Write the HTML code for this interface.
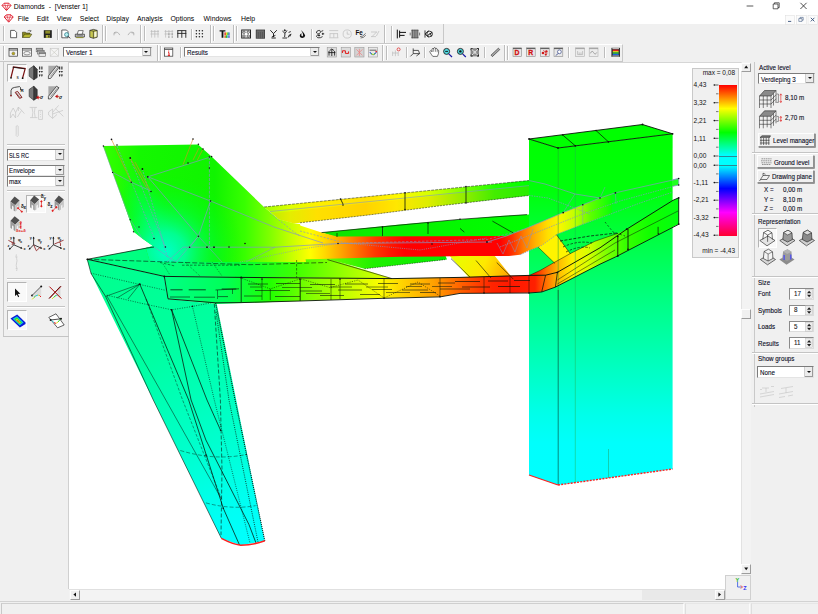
<!DOCTYPE html>
<html lang="en">
<head>
<meta charset="utf-8">
<title>Diamonds - [Venster 1]</title>
<style>
*{box-sizing:border-box;margin:0;padding:0}
html,body{width:818px;height:614px;overflow:hidden;background:#f0f0f0}
body{position:relative;font-family:"Liberation Sans",sans-serif;font-size:6.2px;color:#111;line-height:1}
.abs{position:absolute}
.t{position:absolute;white-space:nowrap;line-height:1}
.white{background:#fff}
.sep{position:absolute;width:1px;background:#bdbdbd;box-shadow:1px 0 0 #fff}
.hline{position:absolute;height:1px;background:#c4c4c4;box-shadow:0 1px 0 #fff}
.combo{position:absolute;background:#fff;border:1px solid #7c7c7c;border-right-color:#e4e4e4;border-bottom-color:#e4e4e4}
.combo .t{left:2px;top:1.6px}
.cbtn{position:absolute;right:0;top:0;bottom:0;width:7px;background:#ececec;border-left:1px solid #cfcfcf}
.cbtn{box-shadow:inset -1px -1px 0 #9a9a9a}
.cbtn:after{content:"";position:absolute;left:1.6px;top:3.4px;border:2.2px solid transparent;border-top:2.2px solid #111;border-bottom:0}
.btn{position:absolute;background:#f0f0f0;border:1px solid #fdfdfd;border-right-color:#909090;border-bottom-color:#909090;box-shadow:.7px .7px 0 #707070}
.sb{box-shadow:none;border-right-color:#9c9c9c;border-bottom-color:#9c9c9c}
.pressed{position:absolute;background:#f9f9f9;border:1px solid #b4b4b4;border-right-color:#fff;border-bottom-color:#fff}
.spin{position:absolute;background:#fff;border:1px solid #8a8a8a;border-right-color:#dcdcdc;border-bottom-color:#dcdcdc}
#rp .t,.ms{transform:scaleX(.845);transform-origin:0 0}
svg{position:absolute;left:0;top:0;overflow:visible}
</style>
</head>
<body>
<!-- title bar + menu -->
<div class="abs white" style="left:0;top:0;width:818px;height:24px"></div>
<div class="t" style="left:13.8px;top:3.9px;font-size:6.9px;color:#000">Diamonds&nbsp; -&nbsp;&nbsp;[Venster 1]</div>
<div class="t" style="top:16.2px;font-size:6.9px;color:#000;left:17.8px">File</div>
<div class="t" style="top:16.2px;font-size:6.9px;color:#000;left:36.7px">Edit</div>
<div class="t" style="top:16.2px;font-size:6.9px;color:#000;left:56.7px">View</div>
<div class="t" style="top:16.2px;font-size:6.9px;color:#000;left:79.8px">Select</div>
<div class="t" style="top:16.2px;font-size:6.9px;color:#000;left:106.3px">Display</div>
<div class="t" style="top:16.2px;font-size:6.9px;color:#000;left:137px">Analysis</div>
<div class="t" style="top:16.2px;font-size:6.9px;color:#000;left:170.5px">Options</div>
<div class="t" style="top:16.2px;font-size:6.9px;color:#000;left:203.6px">Windows</div>
<div class="t" style="top:16.2px;font-size:6.9px;color:#000;left:241px">Help</div>

<!-- toolbar rows -->
<div class="abs" style="left:0;top:24px;width:444px;height:19.5px;border-right:1px solid #c8c8c8;border-bottom:1px solid #c8c8c8"></div>
<div class="abs" style="left:0;top:43.5px;width:623px;height:18px;border-right:1px solid #c8c8c8;border-bottom:1px solid #c8c8c8;border-top:1px solid #fff"></div>

<!-- left panel -->
<div class="abs" style="left:0;top:61.5px;width:69px;height:539px;background:#f0f0f0"></div>
<div class="abs" style="left:3px;top:62px;width:1px;height:274px;background:#c9c9c9"></div>

<!-- canvas -->
<div class="abs white" style="left:68px;top:61.5px;width:673px;height:527.5px;border-left:1px solid #d0d0d0;border-top:1px solid #d6d6d6"></div>

<!-- vertical scrollbar -->
<div class="abs" style="left:741px;top:62px;width:10px;height:512px;background:#f3f3f3;border-left:1px solid #e2e2e2"></div>
<div class="btn sb" style="left:741px;top:62.5px;width:10px;height:9px"></div>
<div class="btn sb" style="left:741px;top:564px;width:10px;height:9.5px"></div>
<div class="btn sb" style="left:741px;top:309px;width:10px;height:10px"></div>
<!-- horizontal scrollbar -->
<div class="abs" style="left:69px;top:589px;width:656px;height:11px;background:#f3f3f3;border-top:1px solid #e0e0e0"></div>
<div class="abs" style="left:642px;top:590px;width:73px;height:10px;background:#e9e9e9"></div>
<div class="btn sb" style="left:69.5px;top:589.5px;width:10px;height:10px"></div>
<div class="btn sb" style="left:714.5px;top:589.5px;width:10px;height:10px"></div>
<!-- axis box -->
<div class="abs" style="left:725px;top:574.5px;width:25.5px;height:25px;background:#f0f0f0;border:1px solid #d0d0d0"></div>

<!-- right panel -->
<div class="abs" style="left:751.5px;top:61.5px;width:67px;height:540px;background:#f0f0f0"></div>
<div class="abs" style="left:753.5px;top:62px;width:1px;height:345px;background:#c9c9c9"></div>

<!-- status bar -->
<div class="abs" style="left:0;top:600.5px;width:818px;height:13.5px;background:#f0f0f0;border-top:1px solid #d2d2d2"></div>
<div class="abs" style="left:1px;top:602.5px;width:683px;height:11.5px;border-top:1px solid #cfcfcf;border-left:1px solid #c8c8c8;border-right:1px solid #fbfbfb"></div>
<div class="abs" style="left:685px;top:602.5px;width:65px;height:11.5px;border-top:1px solid #e6e6e6;border-left:1px solid #dedede;border-right:1px solid #fbfbfb"></div>
<div class="abs" style="left:751px;top:602.5px;width:67px;height:11.5px;border-top:1px solid #e6e6e6;border-left:1px solid #dedede"></div>
<svg width="818" height="614" viewBox="0 0 818 614" shape-rendering="geometricPrecision">
<defs>
<linearGradient id="gCol" gradientUnits="userSpaceOnUse" x1="0" y1="125" x2="0" y2="487">
 <stop offset="0" stop-color="#00ff00"/><stop offset=".18" stop-color="#00ff0a"/><stop offset=".35" stop-color="#00ff50"/>
 <stop offset=".5" stop-color="#00ff88"/><stop offset=".68" stop-color="#00ffc4"/><stop offset=".8" stop-color="#00ffea"/><stop offset=".88" stop-color="#00fffc"/><stop offset="1" stop-color="#00ffff"/>
</linearGradient>
<linearGradient id="gLeg" gradientUnits="userSpaceOnUse" x1="120" y1="250" x2="250" y2="545">
 <stop offset="0" stop-color="#00ff8c"/><stop offset=".35" stop-color="#00ffa2"/><stop offset=".65" stop-color="#00ffcc"/><stop offset=".88" stop-color="#00fff4"/><stop offset="1" stop-color="#00ffff"/>
</linearGradient>
<linearGradient id="gUp" gradientUnits="userSpaceOnUse" x1="264" y1="0" x2="529" y2="0">
 <stop offset="0" stop-color="#a0ff00"/><stop offset=".1" stop-color="#e0ff00"/><stop offset=".2" stop-color="#fff000"/>
 <stop offset=".38" stop-color="#ffe000"/><stop offset=".5" stop-color="#fff800"/><stop offset=".62" stop-color="#d8ff00"/>
 <stop offset=".75" stop-color="#80ff00"/><stop offset=".87" stop-color="#20ff00"/><stop offset="1" stop-color="#00ff00"/>
</linearGradient>
<linearGradient id="gMid" gradientUnits="userSpaceOnUse" x1="100" y1="0" x2="612" y2="0">
<stop offset="0.0000" stop-color="#38ff00"/><stop offset="0.0781" stop-color="#14f800"/><stop offset="0.2246" stop-color="#10f400"/><stop offset="0.2832" stop-color="#38ff00"/><stop offset="0.3320" stop-color="#80ff00"/><stop offset="0.3750" stop-color="#c8ff00"/><stop offset="0.4102" stop-color="#ffff00"/><stop offset="0.4395" stop-color="#ffd800"/><stop offset="0.4688" stop-color="#ffa800"/><stop offset="0.4922" stop-color="#ff8000"/><stop offset="0.5117" stop-color="#ff6000"/><stop offset="0.5371" stop-color="#ff3800"/><stop offset="0.5664" stop-color="#ff1800"/><stop offset="0.5957" stop-color="#ff0000"/><stop offset="0.7812" stop-color="#ff0000"/><stop offset="0.8047" stop-color="#ff3000"/><stop offset="0.8281" stop-color="#ff7c00"/><stop offset="0.8516" stop-color="#ffb400"/><stop offset="0.8750" stop-color="#ffe000"/><stop offset="0.8984" stop-color="#f8f800"/><stop offset="0.9277" stop-color="#c0ff00"/><stop offset="0.9570" stop-color="#60ff00"/><stop offset="1.0000" stop-color="#08ff08"/>
</linearGradient>
<linearGradient id="gLow" gradientUnits="userSpaceOnUse" x1="160" y1="0" x2="680" y2="0">
<stop offset="0.0000" stop-color="#00ff8a"/><stop offset="0.1250" stop-color="#00ff58"/><stop offset="0.2115" stop-color="#20ff00"/><stop offset="0.2885" stop-color="#80ff00"/><stop offset="0.3654" stop-color="#c8ff00"/><stop offset="0.4231" stop-color="#fcfc00"/><stop offset="0.4692" stop-color="#ffd000"/><stop offset="0.5269" stop-color="#ffa000"/><stop offset="0.5827" stop-color="#ff5c00"/><stop offset="0.6385" stop-color="#ff2400"/><stop offset="0.6769" stop-color="#ff1800"/><stop offset="0.7212" stop-color="#ff2000"/><stop offset="0.7423" stop-color="#ff7000"/><stop offset="0.7654" stop-color="#ffb800"/><stop offset="0.7923" stop-color="#fff000"/><stop offset="0.8231" stop-color="#d8ff00"/><stop offset="0.8538" stop-color="#88ff00"/><stop offset="0.8942" stop-color="#38ff00"/><stop offset="0.9423" stop-color="#10ff00"/><stop offset="1.0000" stop-color="#00ff10"/>
</linearGradient>
<radialGradient id="gCy" gradientUnits="userSpaceOnUse" cx="166" cy="252" r="78">
 <stop offset="0" stop-color="#00ffc8"/><stop offset=".25" stop-color="#00ffa0" stop-opacity=".9"/><stop offset=".6" stop-color="#00ff40" stop-opacity=".5"/><stop offset="1" stop-color="#00ff00" stop-opacity="0"/>
</radialGradient>
<linearGradient id="gTopF" gradientUnits="userSpaceOnUse" x1="87" y1="0" x2="395" y2="0">
 <stop offset="0" stop-color="#00ff8a"/><stop offset=".3" stop-color="#00ff78"/><stop offset=".5" stop-color="#00ff34"/><stop offset=".68" stop-color="#40ff00"/><stop offset=".85" stop-color="#a0ff00"/><stop offset="1" stop-color="#f0ff00"/>
</linearGradient>
<linearGradient id="gBr1" gradientUnits="userSpaceOnUse" x1="455" y1="256" x2="510" y2="280">
 <stop offset="0" stop-color="#e8ff00"/><stop offset=".5" stop-color="#ffe800"/><stop offset="1" stop-color="#ffa000"/>
</linearGradient>
<linearGradient id="gGF" gradientUnits="userSpaceOnUse" x1="320" y1="0" x2="530" y2="0">
 <stop offset="0" stop-color="#10e000"/><stop offset=".3" stop-color="#08f000"/><stop offset="1" stop-color="#00ff00"/>
</linearGradient>
<linearGradient id="gStrip" gradientUnits="userSpaceOnUse" x1="300" y1="0" x2="447" y2="0">
 <stop offset="0" stop-color="#90ff00"/><stop offset=".25" stop-color="#58fa00"/><stop offset=".5" stop-color="#20f000"/><stop offset="1" stop-color="#04ec00"/>
</linearGradient>
<radialGradient id="gCy2" gradientUnits="userSpaceOnUse" cx="0" cy="0" r="1" gradientTransform="translate(150,222) rotate(68) scale(62,24)">
 <stop offset="0" stop-color="#00ff88" stop-opacity=".85"/><stop offset=".5" stop-color="#00ff50" stop-opacity=".5"/><stop offset="1" stop-color="#00ff20" stop-opacity="0"/>
</radialGradient>
</defs>

<!-- column -->
<polygon points="529,139 558,148 558,485 529,475" fill="url(#gCol)"/>
<polygon points="558,148 672.6,133.8 672.6,469 558,485" fill="url(#gCol)"/>
<polygon points="529,139 642.5,124.5 672.6,133.8 558,148" fill="#00ff00"/>
<!-- beam tabs on column right -->
<polygon points="672,180 678.7,178.5 678.7,185 672,186.5" fill="#20ff20"/>

<!-- leg + slab left face -->
<polygon points="87,259.4 164,276.4 167.8,299 216.8,304 264.8,540.8 240.8,545.3 221.4,538.4 91.3,273.9" fill="url(#gLeg)"/>

<!-- slab top face -->
<polygon points="87,259.4 145.7,248.1 154,247 200,255 327.4,258 392,278.6 240.6,277 164,276.4" fill="url(#gTopF)"/>
<!-- thin green strip under red band -->
<polygon points="300,258 445,254.5 447,259.5 364.5,268.8 327.4,259" fill="url(#gStrip)"/>

<!-- wing -->
<polygon points="103,146 198,144.5 211,156 264,207 279,219.5 294,223.5 300,224 306,262 150,262 145.7,248.1 153,246 143,239 134,232" fill="url(#gMid)"/>
<polygon points="103,146 198,144.5 211,156 264,207 279,219.5 294,223.5 300,224 306,262 150,262 145.7,248.1 153,246 143,239 134,232" fill="url(#gCy2)"/>
<polygon points="103,146 198,144.5 211,156 264,207 279,219.5 294,223.5 300,224 306,262 150,262 145.7,248.1 153,246 143,239 134,232" fill="url(#gCy)"/>

<!-- upper beam -->
<polygon points="264,207 529,180.5 529,195.5 440,205.8 368.5,215 300,222.8 294,223.5 279,219.5" fill="url(#gUp)"/>

<polygon points="272,213.2 529,186 529,195.5 440,205.8 368.5,215 300,222.8 294,223.5 279,219.5" fill="#ff9000" opacity=".16"/>
<path d="M270,211.5 L529,185.6" stroke="#8595c4" stroke-width=".6" fill="none"/>
<!-- green top face of mid beam -->
<polygon points="321.5,232.6 400,224.6 460,219.6 500,216 529,214.6 529,229 508,237 337,237.5" fill="url(#gGF)"/>

<!-- braces -->
<polygon points="449,255 494,255 513.3,279.1 469.3,278" fill="url(#gBr1)"/>
<polygon points="538,247 556.3,234.5 570.5,254 555,263.5" fill="#fff400"/>
<polygon points="529,275.6 540,270.5 554,262.6 570.6,253.4 594.8,241.3 618,233.2 629,228 600,248.5 557.4,273 545.6,275.6" fill="url(#gLow)"/>

<!-- lower beam front face -->
<polygon points="164,276.4 240.6,277 392,278.6 460,277.2 529,275.2 545.6,275.2 557.4,272.3 600,247.8 626.7,229.2 673,200.3 678.7,197.8 678.7,224.1 615.4,256.8 600,264 555.4,286.9 541.7,291.8 529,292.8 460,293.2 440,296.7 384,298.1 300,301 285,301.5 216.8,304 167.8,299" fill="url(#gLow)"/>

<!-- mid band (wing taper + red band + diagonal) -->
<polygon points="279,219.5 294,223.5 321.5,232.6 337,236.5 440,236.3 506.5,236 526,228.4 535.8,224.2 563.2,212.6 582.8,204.8 600,198 612,193 612,213.5 582.8,224.3 557.4,234.1 541.7,245.5 528.5,250.5 520,254.7 509,256 490,256 460,256 440,256.4 400,256.8 319.6,259 300,259.6 290,240" fill="url(#gMid)"/>


<!-- ===== mesh lines ===== -->
<g fill="none" stroke="#0a140a" stroke-width=".75" stroke-linecap="butt" stroke-linejoin="round">
 <!-- column top -->
 <polygon points="529,139 642.5,124.5 672.6,133.8 558,148" stroke-width=".9"/>
 <path d="M562.7,135 L575.3,145.8 M596,130.5 L608.4,141.8"/>
 <path d="M558.2,148 V300" stroke="#259a35" stroke-width=".5"/>
 <path d="M558.2,290 V485" stroke="#0a3a2a" stroke-width=".6"/>
 <path d="M575.3,145.8 V483" stroke="#20b050" stroke-width=".45"/>
 <path d="M608.5,449 V478" stroke="#20a060" stroke-width=".5"/>
 <!-- slab + leg outline -->
 <path d="M87.3,259.3 L146,248.2 L154,247" />
 <path d="M87.3,259.3 L164.3,276.4 L241.2,277.4 L392,278.6 L460,277.4 L529,275.4 L545.6,275.2 L557.4,272.3 L600,247.8 L626.7,229.2 L673,200.3 L678.7,197.8" stroke-width=".95"/>
 <path d="M87.3,259.3 L91,273.5 L105.6,296.4 L153.3,400 L221.4,538.4" stroke-width=".6"/>
 <path d="M106.9,296 L160.2,390 L220.6,497.5" stroke-width=".5"/>
 <path d="M164.3,276.4 L168,298.9 L215.6,302.8 L241.2,302.6 L300,301 L384,298.3 L440,296.9 L460,293.4 L529,293 L541.7,292 L555.4,287.1 L600,264.2 L615.4,257 L678.7,224.3 V197.8" stroke-width=".9"/>
 <path d="M241.2,277.4 V302.5"/>
 <path d="M139.8,284.2 L188.7,400 L223.3,508.3 L239.5,545"/>
 <path d="M171.6,309.8 L191.1,400 L205.9,440 L248.9,524.4 L256,543" />
 <path d="M171.6,309.8 L207,400 L220.6,430.3" />
 <path d="M139.8,284.2 L105.6,296.4 M139.8,284.2 L117,298 M139.8,284.2 L128,299" stroke-width=".5"/>
 <path d="M215.6,302.8 L235.1,400 L264.8,540.8" stroke-dasharray="1 1" stroke-width="1.1"/>
 <!-- lower beam right part -->
 <path d="M617.8,236 V256 M628,229 V249.4" stroke-width=".9"/><path d="M658.1,226.8 V234.2" stroke-width=".7"/>
 <path d="M557.4,272.3 L555.4,287.1 M545.6,275.2 L541.7,292"/>
 <path d="M557.4,280 L615,243 L678,211 M557.4,284 L615,250" stroke-width=".5"/>
 <path d="M529,275.6 L540,270.5 L554,262.6 L570.6,253.4 L594.8,241.3 L618,233.2" stroke-width=".5"/>
 <!-- mid green face -->
 <path d="M321.5,232.6 L460,219.3 L527,214.6" stroke-width=".7"/>
 <path d="M337,233 V237 M382.5,227 V236 M428,223 V234 M492.4,221.1 L513.8,233.3 M460,228.4 L464.3,232.1" stroke-width=".7"/>
 <!-- upper beam -->
 <path d="M264,207 L529,180.5" stroke-width=".5" stroke-dasharray="3 1"/>
 <path d="M300,222.8 L368.5,215 L440,205.8 L529,195.5" stroke-width=".5" stroke-dasharray="2 1"/>
 <path d="M340.5,199 L343,204 M405,192.8 V209.5 M466,186.5 V203" stroke-width=".8"/>
 <!-- braces -->
 <path d="M451,258.6 L470,277 M496.7,262.5 L513.3,279.1 M476,260.5 L491,278" stroke-width=".6"/>
 <path d="M538,247 L555,263.5 M556.3,234.5 L570.5,254" stroke-width=".5"/>
 <!-- diagonal edge of slab top face -->
 <path d="M327.4,259.6 L392,278.6" stroke-width=".6"/>
 <path d="M364.5,268.8 L445,259.6" stroke-width=".5" stroke-dasharray="1.5 1"/>
</g>
<!-- dashed black lines -->
<g fill="none" stroke="#0a140a" stroke-width=".7" stroke-opacity=".85">
 <path d="M87.3,259.3 L250,264.7 L327,262.5" stroke-dasharray="5 2"/>
 <path d="M91,273.2 L138.6,284.2 L165.5,290.3" stroke-dasharray="1 1.4"/>
 <path d="M106.9,295.2 L140,303 L171.6,309.8 L192,306.5 L213.1,302.5" stroke-dasharray="1 1.4"/>
 <path d="M146,298.9 L182.6,400 L222,500" stroke-dasharray="3 1.5" stroke-width=".5"/>
 <path d="M192.4,306.2 L214.3,400 L250,543" stroke-dasharray="1 1.2"/>
 <path d="M214.3,303.7 L220.4,400 L222,470 L221,535" stroke-dasharray="4 2"/>
 <path d="M216,312 L229,400 L258,542" stroke-dasharray="1 1.2" stroke-width=".9"/>
 <path d="M180.3,450.5 Q215,461 246.2,454.5" stroke-dasharray="4 2" stroke-width=".5"/>
 <path d="M205.9,502.9 Q232,510 255.6,505.6" stroke-dasharray="4 2" stroke-width=".5"/>
 <!-- dashes on lower beam front face -->
 <path d="M170.4,289.8 H182.6 M188.7,289.8 H205.8 M221.7,289 H236.3" stroke-width=".9"/>
 <path d="M170,297 H190 M194,297.2 H215 M218,296.6 H228 M215.5,290 L239,288.8" stroke-width=".7"/>
 <path d="M248,284 H268 M276,283.5 H300 M310,284.5 H335 M345,284 H368 M378,283.5 H398 M410,284 H430 M438,283 H455" stroke-width=".7"/>
 <path d="M255,290.5 H290 M300,291 H322 M338,290 H362 M372,289.5 H392 M402,290 H428 M440,289 H470" stroke-width=".7"/>
 <path d="M244,296 H262 M275,296.5 H300 M320,295.5 H344 M360,294.5 H380 M420,292.5 H436" stroke-width=".7"/>
 <path d="M250,287 H262 M282,287.5 H312 M330,287 H352 M366,287 H388 M406,286.5 H422 M432,286.5 H452 M306,293.5 H330 M386,292.5 H410" stroke-width=".6"/>
 <path d="M240,277.6 L270.3,288.9 L300.4,278.8 L330,287.6 L358,280 L384,298 L418,282 L440,296" stroke-dasharray="1.2 1.2" stroke-width=".6"/>
 <path d="M182,265.2 H240 M160,262.5 L175,266 M296.6,260 V277.5" stroke-dasharray="2.5 1.5" stroke-width=".6"/>
 <path d="M163,264 L170,275 M185,262 L200,276 M212,262 L222,276" stroke-dasharray="1 1.2" stroke-width=".5"/>
 <path d="M217.5,290 V299 M232.5,289 V294 M270.3,288.9 V300 M300.4,279 V300.5 M331,279 V300" stroke-width=".6"/>
 <path d="M262,279 V300 M300,279 V301 M340,279 V299 M384,279 V298 M440,278 V296.7 M484,277 V293 M510,276.5 V293 M529,275.4 V293" stroke-width=".6"/>
 <path d="M455,281.5 H480 M488,281 H508 M514,280.5 H530 M462,287 H490 M498,286.5 H520" stroke-width=".8"/>
 <!-- window on column -->
 <path d="M560,241 L590,236 L617,233" stroke-dasharray="3 1.5" stroke-width=".9"/>
 <path d="M563,247 Q578,240 592,243 M566,252 Q580,245 590,248" stroke-dasharray="2.5 1.5" stroke-width=".8"/>
 <path d="M605,222 L613,232 L625,236" stroke-dasharray="2 2"/>
</g>
<!-- gray-blue lines -->
<g fill="none" stroke="#8595c4" stroke-width=".7">
 <path d="M112.6,172.4 L131.3,182.3 L151,191"/>
 <path d="M147.8,176.8 L210.5,157"/>
 <path d="M147.8,176.8 L210.5,201 L275,227.4 L323,243"/>
 <path d="M147.8,176.8 L198.4,236.2 L189.6,247.2"/>
 <path d="M210.5,201 L198.4,236.2"/>
 <path d="M209.4,157 V247" stroke-dasharray="3 1.2"/>
 <path d="M183,247.2 H275 L338,243.5 L492,242"/>
 <path d="M117,146 L154.4,238.5 M130.2,158 L165.4,247 M142.4,169 L167.6,258" stroke-dasharray="2 1.2"/>
 <path d="M103.4,146 L112.6,172.4 L130.2,219.7 L142.3,238.4" stroke-width=".5"/>
 <path d="M154,247 L176,262 M176,262 L198.4,236.2 L222,262 M167,262 L183,247.2 M246,262 L275,247.2" stroke-width=".55"/>
 <path d="M240,262 L302,249 L338,243.5" stroke-dasharray="1 1.2"/>
 <path d="M300,231 L345,243 M270,213 L294,232 L300,236" stroke-dasharray="2 1.5"/>
 <path d="M345,243 L420,250 L487,238" stroke-dasharray="1 1.2"/>
 <path d="M338,243.5 L487,239.5 L529,228" stroke-dasharray="2.5 1.5" stroke-width=".55"/>
 <!-- diag beam -->
 <path d="M487,242 L506.5,236 L526,228.4 L563.2,212.6 L600,198 L615.4,192.8 L673,180 L678.7,178.5"/>
 <path d="M500,247 L540,231 L582.8,214 L620,201 L673,186.5" stroke-dasharray="1.5 1"/>
 <path d="M520.2,254.7 L541.7,245.5 L557.4,234.1 L582.8,224.3 L612,213.5 L640,203 L673,192" stroke-dasharray="1.5 1"/>
 <path d="M497,243 L503,254 L509,240 L515,252 L521,236 L527,248 L533,229"  stroke-width=".5"/>
 <path d="M529,180.5 L545,184 L575,194 L600,198" />
 <path d="M529,195.5 L548,198 L572,207 L590,214" stroke-dasharray="1.5 1"/>
 <path d="M563.2,212.6 L575,194 M600,198 L605,187 M615.4,192.8 L616,204 M582.8,204.8 V224"  stroke-width=".5"/>
 <path d="M672,180 L678.7,178.5 V185 L672,186.5"/>
</g>
<!-- orange lines on wing -->
<g fill="none" stroke="#e08a20" stroke-width=".6">
 <path d="M111.5,139.4 L131.3,182.3 M130.2,158.1 L146.7,187.8 M135,162 L150,190 M193,139 L183,164.7 M202.8,149.3 L197.3,160.3 M199,148 L193,160"/>
</g>
<!-- node dots -->
<g fill="#101010">
 <circle cx="103.4" cy="146" r=".8"/><circle cx="111.5" cy="139.4" r=".8"/><circle cx="117" cy="145" r=".8"/><circle cx="130.2" cy="158" r=".9"/><circle cx="142.4" cy="169" r=".9"/><circle cx="147.8" cy="176.8" r=".9"/>
 <circle cx="131.3" cy="182.3" r=".8"/><circle cx="151" cy="191.5" r=".8"/><circle cx="112.6" cy="172.4" r=".7"/><circle cx="193" cy="139" r=".8"/><circle cx="198.4" cy="144.2" r=".8"/><circle cx="203" cy="149" r=".8"/>
 <circle cx="209.4" cy="157" r=".8"/><circle cx="211.6" cy="156.6" r=".8"/><circle cx="188" cy="163" r=".8"/><circle cx="209.4" cy="168" r=".7"/><circle cx="210.5" cy="201" r=".8"/><circle cx="198.4" cy="236.2" r=".8"/>
 <circle cx="189.6" cy="247.2" r=".8"/><circle cx="207" cy="247.2" r=".9"/><circle cx="214" cy="247.2" r=".9"/><circle cx="229" cy="247" r=".8"/><circle cx="245" cy="243.5" r=".8"/>
 <circle cx="130.2" cy="219.7" r=".7"/><circle cx="133.5" cy="231.8" r=".7"/><circle cx="139" cy="227" r=".7"/><circle cx="154" cy="238.5" r=".8"/><circle cx="165.4" cy="247" r=".8"/>
 <circle cx="87.3" cy="259.3" r=".9"/><circle cx="164.3" cy="276.4" r=".9"/><circle cx="139.8" cy="284.2" r=".9"/><circle cx="171.6" cy="309.8" r=".9"/><circle cx="192.4" cy="306.2" r=".8"/><circle cx="241.2" cy="277.4" r=".9"/>
 <circle cx="529" cy="139" r=".9"/><circle cx="642.5" cy="124.5" r=".9"/><circle cx="672.6" cy="133.8" r=".9"/><circle cx="558" cy="148" r=".9"/><circle cx="575.3" cy="145.8" r=".9"/><circle cx="608.4" cy="141.8" r=".9"/><circle cx="562.7" cy="135" r=".8"/><circle cx="596" cy="130.5" r=".8"/>
 <circle cx="340.5" cy="199" r=".8"/><circle cx="405" cy="192.8" r=".8"/><circle cx="466" cy="186.5" r=".8"/><circle cx="343" cy="205" r=".8"/><circle cx="405" cy="209.5" r=".8"/><circle cx="466" cy="203" r=".8"/>
 <circle cx="382.5" cy="227" r=".8"/><circle cx="428" cy="223" r=".8"/><circle cx="460" cy="219.3" r=".8"/><circle cx="487" cy="242" r=".9"/><circle cx="338" cy="243.5" r=".8"/><circle cx="432" cy="244" r=".8"/>
 <circle cx="262" cy="279" r=".8"/><circle cx="300" cy="279" r=".8"/><circle cx="340" cy="279" r=".8"/><circle cx="384" cy="298.3" r=".8"/><circle cx="440" cy="296.7" r=".8"/><circle cx="484" cy="293" r=".8"/><circle cx="529" cy="293" r=".8"/>
 <circle cx="557.4" cy="272.3" r=".9"/><circle cx="617.8" cy="256" r=".9"/><circle cx="628" cy="249.4" r=".9"/><circle cx="617.8" cy="236.5" r=".8"/><circle cx="626.7" cy="229.2" r=".9"/><circle cx="678.7" cy="197.8" r=".9"/><circle cx="678.7" cy="224.1" r=".9"/><circle cx="658.6" cy="234" r=".8"/>
 <circle cx="563.2" cy="212.6" r=".9"/><circle cx="582.8" cy="204.8" r=".8"/><circle cx="615.4" cy="192.8" r=".9"/><circle cx="600" cy="198" r=".8"/><circle cx="678.7" cy="178.5" r=".8"/><circle cx="678.7" cy="185" r=".8"/>
 <circle cx="220.6" cy="430.3" r=".8"/><circle cx="223.3" cy="508.3" r=".8"/><circle cx="205.9" cy="455" r=".7"/><circle cx="246.2" cy="454.5" r=".7"/>
</g>

<!-- support red lines -->
<polyline points="529,475 558,485" fill="none" stroke="#ff2020" stroke-width="1.3"/><polyline points="558,485 672.6,469" fill="none" stroke="#ff2020" stroke-width="1.4" stroke-dasharray="2 1.2"/>
<path d="M221.4,538.4 Q232,544 240.8,545.3 Q254,545 264.8,540.8" fill="none" stroke="#ff2020" stroke-width="1.6"/>
</svg>
<!-- legend -->
<div class="abs" style="left:692px;top:67.5px;width:46.5px;height:190px;background:#f0f0f0;border:1px solid #c9c9c9"></div>
<div class="abs" style="left:718.5px;top:84.8px;width:18px;height:151.4px;background:linear-gradient(to bottom,#ff0000 0%,#ffff00 15.6%,#00ff00 31.4%,#00ffff 46.5%,#00ffff 53.5%,#0000ff 68.6%,#ff00ff 84.4%,#ff0030 100%)"></div>
<div class="abs" style="left:718.5px;top:155.6px;width:18px;height:.7px;background:#2a8a96"></div>
<div class="abs" style="left:718.5px;top:164.9px;width:18px;height:.7px;background:#2a8a96"></div>
<div class="t" style="right:83px;top:70.2px;font-size:6.5px">max = 0,08</div>
<div class="t" style="right:83px;top:247.6px;font-size:6.5px">min = -4,43</div>
<svg width="818" height="614" viewBox="0 0 818 614">
<g font-family="Liberation Sans, sans-serif" font-size="6.6" fill="#111">
<text x="693.6" y="87.4">4,43</text><text x="693.6" y="105">3,32</text><text x="693.6" y="123">2,21</text><text x="693.6" y="140.6">1,11</text>
<text x="693.6" y="158.3">0,00</text><text x="693.6" y="167.6">0,00</text><text x="693.6" y="184.8">-1,11</text><text x="693.6" y="202.4">-2,21</text>
<text x="693.6" y="219.8">-3,32</text><text x="693.6" y="237.4">-4,43</text>
</g>
<g stroke="#222" stroke-width=".7" fill="#111">
<path d="M714.5,85H718.5 M714.5,102.7H718.5 M714.5,120.6H718.5 M714.5,138.3H718.5 M714.5,156H718.5 M714.5,165.2H718.5 M714.5,182.6H718.5 M714.5,200.2H718.5 M714.5,217.6H718.5 M714.5,235.2H718.5"/>
<path d="M716,93.8H718.5 M716,111.6H718.5 M716,129.4H718.5 M716,147.2H718.5 M716,173.9H718.5 M716,191.4H718.5 M716,208.9H718.5 M716,226.4H718.5" stroke-width=".6"/>
<circle cx="714.3" cy="85" r=".8" stroke="none"/><circle cx="714.3" cy="102.7" r=".8" stroke="none"/><circle cx="714.3" cy="120.6" r=".8" stroke="none"/><circle cx="714.3" cy="138.3" r=".8" stroke="none"/><circle cx="714.3" cy="156" r=".8" stroke="none"/>
<circle cx="714.3" cy="165.2" r=".8" stroke="none"/><circle cx="714.3" cy="182.6" r=".8" stroke="none"/><circle cx="714.3" cy="200.2" r=".8" stroke="none"/><circle cx="714.3" cy="217.6" r=".8" stroke="none"/><circle cx="714.3" cy="235.2" r=".8" stroke="none"/>
</g>
</svg>
<!-- right panel -->
<div id="rp" style="position:absolute;left:0;top:0;font-size:7.4px;color:#0a0a1c;-webkit-text-stroke:.12px #0a0a1c">
<div class="t" style="left:759.3px;top:63.7px">Active level</div>
<div class="combo" style="left:757.5px;top:73px;width:57.5px;height:11.3px"><div class="t" style="top:1.5px;left:2.2px">Verdieping 3</div><div class="cbtn" style="width:9px"></div></div>
<div class="t" style="left:785px;top:93.6px">8,10 m</div>
<div class="t" style="left:785px;top:113.6px">2,70 m</div>
<div class="btn" style="left:757.5px;top:133.4px;width:57.3px;height:13.2px"><div class="t" style="left:14.6px;top:3px">Level manager</div></div>
<div class="hline" style="left:752px;top:152px;width:66px"></div>
<div class="btn" style="left:756.8px;top:155px;width:57px;height:12.6px"><div class="t" style="left:16.5px;top:2.5px">Ground level</div></div>
<div class="btn" style="left:756.8px;top:169.6px;width:57px;height:13.4px"><div class="t" style="left:14.1px;top:2.7px">Drawing plane</div></div>
<div class="t" style="left:764.3px;top:186.2px">X =</div><div class="t" style="left:783.1px;top:186.2px">0,00 m</div>
<div class="t" style="left:764.3px;top:195.5px">Y =</div><div class="t" style="left:783.1px;top:195.5px">8,10 m</div>
<div class="t" style="left:764.3px;top:205px">Z =</div><div class="t" style="left:783.1px;top:205px">0,00 m</div>
<div class="hline" style="left:752px;top:213px;width:66px"></div>
<div class="t" style="left:758px;top:217.8px">Representation</div>
<div class="pressed" style="left:757.5px;top:228.3px;width:19.5px;height:19.5px"></div>
<div class="hline" style="left:752px;top:275.5px;width:66px"></div>
<div class="t" style="left:758px;top:278.8px">Size</div>
<div class="t" style="left:758px;top:290.4px">Font</div>
<div class="t" style="left:758px;top:306.6px">Symbols</div>
<div class="t" style="left:758px;top:322.9px">Loads</div>
<div class="t" style="left:758px;top:339.6px">Results</div>
<div class="spin" style="left:789px;top:288px;width:24.5px;height:11.5px"><div class="t" style="left:4px;top:.6px;color:#222">17</div></div>
<div class="spin" style="left:789px;top:304.5px;width:24.5px;height:11.2px"><div class="t" style="left:4px;top:.6px;color:#222">8</div></div>
<div class="spin" style="left:789px;top:321.1px;width:24.5px;height:11.3px"><div class="t" style="left:4px;top:.6px;color:#222">5</div></div>
<div class="spin" style="left:789px;top:337.2px;width:24.5px;height:11.6px"><div class="t" style="left:4px;top:.6px;color:#222">11</div></div>
<div class="hline" style="left:752px;top:351.8px;width:66px"></div>
<div class="t" style="left:758px;top:355px">Show groups</div>
<div class="combo" style="left:756.8px;top:366.4px;width:57.5px;height:11.3px"><div class="t" style="top:1.6px;left:2px">None</div><div class="cbtn" style="width:9px"></div></div>
<div class="hline" style="left:752px;top:403px;width:66px"></div>
</div>
<svg width="818" height="614" viewBox="0 0 818 614">
<!-- spinner arrows -->
<g fill="#222">
 <g id="spA"><rect x="805.5" y="289.3" width="7.2" height="9" fill="#ececec" stroke="#bdbdbd" stroke-width=".5"/><path d="M807,293.2 L809.1,290.8 L811.2,293.2Z M807,294.8 L809.1,297.2 L811.2,294.8Z"/><path d="M805.5,293.9 H812.7" stroke="#c8c8c8" stroke-width=".4"/></g>
 <use href="#spA" y="16.5"/><use href="#spA" y="33"/><use href="#spA" y="49.3"/>
</g>
<!-- level building icons -->
<g id="bld" stroke="#222" stroke-width=".55" fill="none">
 <path d="M759.5,96 L764.5,90.5 H776 L771,96Z" fill="#8a8a8a"/>
 <path d="M759.5,96 V108 M763.3,96 V108 M767.2,96 V107 M771,96 V108 M776,90.5 V103 M773.5,93.5 V105.5 M759.5,100 H771 L776,94.8 M759.5,104 H771 L776,98.8"/>
</g>
<use href="#bld" y="20.3"/>
<path d="M776.6,94 H778.4 V102.4 H776.6" stroke="#333" stroke-width=".5" fill="none"/><path d="M780.8,94 V102.4 M779.8,95.4 L780.8,93.8 L781.8,95.4 M779.8,101 L780.8,102.6 L781.8,101" stroke="#e02020" stroke-width=".6" fill="none"/>
<path d="M776.6,116.4 H778.4 V121.4 H776.6" stroke="#333" stroke-width=".5" fill="none"/><path d="M780.8,116.6 V121.2 M779.8,117.8 L780.8,116.4 L781.8,117.8 M779.8,120 L780.8,121.4 L781.8,120" stroke="#e02020" stroke-width=".7" fill="none"/>
<!-- level manager icon -->
<g stroke="#222" stroke-width=".6" fill="none"><path d="M760,137.5 H769.5 M760,140.3 H769.5 M760,143 H769.5 M761,137.5 V145 M763.6,137.5 V145 M766.2,137.5 V145 M768.8,137.5 V145"/><path d="M760,137.5 L762,135.8 H770.5 L769.5,137.5" fill="#777"/></g>
<!-- ground level icon -->
<g stroke="#555" stroke-width=".6" fill="none"><path d="M761.5,158.8 H771.5 M761,160.8 H772 M761.5,162.8 H771.5 M762,164.5 H771" stroke-dasharray="1.6 .6"/></g>
<!-- drawing plane icon -->
<g stroke="#222" stroke-width=".6" fill="none"><path d="M760.5,179.5 L763,175.5 H769.5 L767,179.5Z M763,175.5 V173.2 M763,173.2 L765.5,174.3 M760.5,179.5 L759.5,181"/></g>
<!-- representation icons -->
<g id="rep" stroke="#1a1a1a" stroke-width=".6" fill="none">
 <path d="M759.8,240.5 L767,245.8 L775,240.5 L768,236 Z" fill="#e4e4e4"/>
 <path d="M762.8,239.5 L763.6,232.5 L768,230.2 L772,232.8 L772.4,239.5 M763.6,232.5 L767.6,235 L772,232.8 M767.6,235 V241.8" />
</g>
<g transform="translate(20,0)"><path d="M759.8,240.5 L767,245.8 L775,240.5 L768,236 Z" fill="#d0d0d0" stroke="#1a1a1a" stroke-width=".6"/><path d="M762.8,239.5 L763.6,232.5 L768,230.2 L772,232.8 L772.4,239.5 L767.6,242Z" fill="#9a9a9a" stroke="#1a1a1a" stroke-width=".6"/><path d="M763.6,232.5 L767.6,235 L772,232.8 L768,230.2Z" fill="#e8e8e8" stroke="#1a1a1a" stroke-width=".5"/></g>
<g transform="translate(39.5,0)"><path d="M759.8,240.5 L767,245.8 L775,240.5 L768,236 Z" fill="#d0d0d0" stroke="#1a1a1a" stroke-width=".6"/><path d="M762.8,239.5 L763.6,232.5 L768,230.2 L772,232.8 L772.4,239.5 L767.6,242Z" fill="#8a8a8a" stroke="#1a1a1a" stroke-width=".6"/><path d="M763.6,232.5 L767.6,235 L772,232.8 L768,230.2Z" fill="#dcdcdc" stroke="#1a1a1a" stroke-width=".5"/></g>
<g transform="translate(0.5,19)"><path d="M759.8,240.5 L767,245.8 L775,240.5 L768,236 Z" fill="#d8d8d8" stroke="#1a1a1a" stroke-width=".6"/><path d="M762.8,239.5 L763.6,232.5 L768,230.2 L772,232.8 L772.4,239.5 L767.6,242Z" fill="#f4f4f4" stroke="#1a1a1a" stroke-width=".6"/><path d="M763.6,232.5 L767.6,235 L772,232.8 M767.6,235 V242" fill="none" stroke="#1a1a1a" stroke-width=".5"/></g>
<g transform="translate(19.5,19)"><path d="M759.8,240.5 L767,245.8 L775,240.5 L768,236 Z" fill="#8c8c8c"/><path d="M762.8,239.5 L763.6,232.5 L768,230.2 L772,232.8 L772.4,239.5 L767.6,242Z" fill="#9c9c9c"/><path d="M763.6,232.5 L767.6,235 L772,232.8 L768,230.2Z" fill="#b4b4b4"/><path d="M764.6,236 V241 M771.3,235.5 V240.5" stroke="#4040ff" stroke-width="1.1"/></g>
<!-- show-groups disabled icons -->
<g stroke="#c2c2c2" stroke-width=".6" fill="none">
 <path d="M760,394 L774,391.5 M760,397 L774,394.5 M762,388 H769 M766,388 V392 M771,386.5 H774 M760,389.5 H762"/>
 <path d="M779,394 L793,391.5 M779,397.5 L785,396.5 M788,396 L793,395 M781,388.5 L793,386.5 M786,388 V393"/>
</g>
</svg>
<!-- toolbars -->
<div class="sep" style="left:2.8px;top:26px;height:15px"></div>
<div class="sep" style="left:56.6px;top:28.5px;height:11.5px"></div>
<div class="sep" style="left:102.3px;top:25px;height:18px"></div><div class="sep" style="left:105px;top:26px;height:15px"></div>
<div class="sep" style="left:140.4px;top:25px;height:18px"></div><div class="sep" style="left:143.9px;top:26px;height:15px"></div>
<div class="sep" style="left:190.9px;top:28.5px;height:11.5px"></div>
<div class="sep" style="left:210.1px;top:25px;height:18px"></div><div class="sep" style="left:213.2px;top:26px;height:15px"></div>
<div class="sep" style="left:233px;top:25px;height:18px"></div><div class="sep" style="left:235.8px;top:26px;height:15px"></div>
<div class="sep" style="left:310.8px;top:28.5px;height:11.5px"></div>
<div class="sep" style="left:383.8px;top:25px;height:18px"></div><div class="sep" style="left:391.4px;top:26px;height:15px"></div>
<!-- row 2 -->
<div class="sep" style="left:2.8px;top:45.5px;height:14px"></div>
<div class="sep" style="left:157px;top:44.5px;height:16px"></div><div class="sep" style="left:159.8px;top:45.5px;height:14px"></div>
<div class="sep" style="left:179.5px;top:47px;height:11px"></div>
<div class="sep" style="left:382.3px;top:44.5px;height:16px"></div><div class="sep" style="left:385.5px;top:45.5px;height:14px"></div>
<div class="sep" style="left:405.5px;top:47px;height:11px"></div>
<div class="sep" style="left:423.7px;top:47px;height:11px"></div>
<div class="sep" style="left:483.8px;top:47px;height:11px"></div>
<div class="sep" style="left:504.4px;top:44.5px;height:16px"></div><div class="sep" style="left:507.3px;top:45.5px;height:14px"></div>
<div class="sep" style="left:568.4px;top:47px;height:11px"></div>
<div class="sep" style="left:604.1px;top:47px;height:11px"></div>
<div class="combo" style="left:62.7px;top:46.9px;width:89px;height:10.6px;font-size:7.4px;color:#0a0a1c;-webkit-text-stroke:.12px #0a0a1c"><div class="t ms" style="top:1.1px;left:2.1px">Venster 1</div><div class="cbtn" style="width:9px"></div></div>
<div class="combo" style="left:184px;top:46.9px;width:136px;height:10.6px;font-size:7.4px;color:#0a0a1c;-webkit-text-stroke:.12px #0a0a1c"><div class="t ms" style="top:1.1px;left:2px">Results</div><div class="cbtn" style="width:9px"></div></div>
<svg width="818" height="614" viewBox="0 0 818 614">
<!-- window controls -->
<g stroke="#222" stroke-width=".75" fill="none">
 <path d="M746.6,6 H753.3"/>
 <path d="M773.2,4 H778 V8.8 H773.2Z M774.4,4 V2.8 H779.2 V7.6 H778" stroke-width=".7"/>
 <path d="M800.4,2.8 L806.6,9 M806.6,2.8 L800.4,9" stroke-width=".8"/>
</g>
<g stroke="#dcdcdc" stroke-width=".5" fill="#fbfbfb"><rect x="785.4" y="15.6" width="9.2" height="8.6"/><rect x="796.2" y="15.6" width="10.2" height="8.6"/><rect x="808" y="15.6" width="9.4" height="8.6"/></g>
<g stroke="#35507a" stroke-width=".7" fill="none">
 <path d="M788,21.4 H791.2" stroke-width=".9"/>
 <path d="M798.8,18.6 H802 V21.4 H798.8Z M800,18.6 V17.4 H803.2 V20.2 H802" stroke-width=".55"/>
 <path d="M810.8,17.8 L814.4,21.4 M814.4,17.8 L810.8,21.4" stroke-width=".9"/>
</g>
<!-- app icons (diamond) -->
<g id="dia"><path d="M2,5.4 L4.2,3.2 H8.8 L11,5.4 L6.5,10.6Z" fill="#fff" stroke="#e02030" stroke-width="1"/><path d="M2,5.6 H11 M4.6,3.4 L6.5,10 L8.4,3.4" fill="none" stroke="#e02030" stroke-width=".65"/></g>
<use href="#dia" x="2.2" y="11.6"/>
<!-- row1 icons -->
<path d="M10.6,30.4 H14.6 L16.6,32.4 V37.7 H10.6Z" fill="#fff" stroke="#222" stroke-width=".7"/>
<path d="M22.5,37.5 V32.2 H25.5 L26.3,33 H30 V34.2" fill="#8a8a20" stroke="#3a3a10" stroke-width=".6"/><path d="M22.5,37.5 L24.6,34.2 H31.8 L29.6,37.5Z" fill="#b8b830" stroke="#3a3a10" stroke-width=".6"/><path d="M27.6,31 Q29.5,29.6 30.8,31.2 M30.9,31.3 L30.9,30 M30.9,31.3 L29.7,31.3" fill="none" stroke="#222" stroke-width=".55"/>
<rect x="43.8" y="30.2" width="8" height="7.7" fill="#222"/><rect x="45.3" y="30.6" width="4.8" height="3" fill="#8c8c28"/><rect x="45.8" y="35" width="4" height="2.9" fill="#b0b040"/><rect x="48.3" y="35.4" width="1" height="2" fill="#222"/>
<path d="M61.8,30 H66.5 L68,31.6 V37.8 H61.8Z" fill="#fff" stroke="#222" stroke-width=".7"/><circle cx="66.6" cy="34.6" r="2" fill="#b8f0f0" stroke="#207080" stroke-width=".7"/><path d="M68,36.2 L70.2,38.4" stroke="#222" stroke-width=".9"/>
<path d="M75.3,34.2 H84.4 V37 H75.3Z" fill="#d8d8d8" stroke="#222" stroke-width=".7"/><path d="M77.2,34.2 L78.4,30.6 H83.2 L82.2,34.2Z" fill="#fff" stroke="#222" stroke-width=".6"/><path d="M76.2,37.6 H83.4" stroke="#8a8a20" stroke-width=".9"/><path d="M76.5,35.6 H83" stroke="#555" stroke-width=".6"/>
<path d="M89.8,30.4 L93.4,29.4 L97.2,30.4 V37.2 L93.4,38.3 L89.8,37.2Z" fill="#c8c850" stroke="#222" stroke-width=".7"/><path d="M93.4,31.2 V38.3 M89.8,30.4 L93.4,31.2 L97.2,30.4" fill="none" stroke="#222" stroke-width=".6"/><path d="M94.3,32 L96.5,31.4 V36.4 L94.3,37Z" fill="#f4f4e0"/>
<g stroke="#a8a8a8" stroke-width=".8" fill="none"><path d="M114,32.4 Q117.5,30 119.8,34.6 M114,32.4 V34.8 M114,32.4 H116.2" transform="translate(0,.5)"/><path d="M133.8,32.4 Q130.3,30 128,34.6 M133.8,32.4 V34.8 M133.8,32.4 H131.6" transform="translate(0,.5)"/></g>
<g stroke="#b9b9b9" stroke-width=".7" fill="none"><path d="M150.5,31.4 H159 M150.5,34 H159 M151.6,30 V37.6 M154.8,30 V37.6 M158,30 V37.6"/><path d="M164.5,31.4 H173.2 M164.5,34 H173.2 M165.6,30 V37.6 M168.9,30 V37.6 M172.2,30 V37.6"/></g>
<g fill="#777"><circle cx="168.9" cy="34" r=".6"/><circle cx="172.2" cy="34" r=".6"/><circle cx="168.9" cy="37" r=".6"/><circle cx="172.2" cy="37" r=".6"/></g>
<g stroke="#222" stroke-width=".9" fill="none"><path d="M177.3,30.6 H186.3 M177.3,33.4 H186.3 M177.8,30.6 V37.8 M181.8,30.6 V37.8 M185.8,30.6 V37.8"/></g>
<g fill="#222"><circle cx="196.4" cy="30.8" r=".75"/><circle cx="199.4" cy="30.8" r=".75"/><circle cx="202.4" cy="30.8" r=".75"/><circle cx="196.4" cy="33.8" r=".75"/><circle cx="199.4" cy="33.8" r=".75"/><circle cx="202.4" cy="33.8" r=".75"/><circle cx="196.4" cy="36.8" r=".75"/><circle cx="199.4" cy="36.8" r=".75"/><circle cx="202.4" cy="36.8" r=".75"/></g>
<path d="M219.6,30.2 H225.4 V31.6 H223.4 V37.8 H221.6 V31.6 H219.6Z" fill="#111"/><g><rect x="224.4" y="32.4" width="1.5" height="2.6" fill="#e03030"/><rect x="225.9" y="32.4" width="1.4" height="2.6" fill="#e8e020"/><rect x="227.3" y="32.4" width="1.4" height="2.6" fill="#30c030"/><rect x="228.6" y="32.4" width="1" height="2.6" fill="#3060e0"/><rect x="224.4" y="35.3" width="1.5" height="2.6" fill="#e07020"/><rect x="225.9" y="35.3" width="1.4" height="2.6" fill="#30c030"/><rect x="227.3" y="35.3" width="1.4" height="2.6" fill="#30c0d0"/><rect x="228.6" y="35.3" width="1" height="2.6" fill="#6030d0"/></g>
<rect x="241.7" y="30" width="8.8" height="8" fill="#fff" stroke="#222" stroke-width="1"/><g fill="none" stroke="#222" stroke-width=".7"><circle cx="244" cy="32.2" r="1.2"/><circle cx="248.2" cy="32.2" r="1.2"/><circle cx="244" cy="36" r="1.2"/><circle cx="248.2" cy="36" r="1.2"/></g>
<rect x="256.2" y="30" width="8.4" height="8.2" fill="#777" stroke="#333" stroke-width=".8"/><path d="M256.2,32 H264.6 M258.3,32 V38.2 M260.4,32 V38.2 M262.5,32 V38.2 M256.2,34 H264.6 M256.2,36 H264.6" stroke="#444" stroke-width=".5" fill="none"/>
<g stroke="#111" stroke-width=".9" fill="none"><path d="M270.3,30.2 L273.5,33.6 L276.8,30.2 M273.5,33.6 V37 M271.5,38 H275.8 M271.8,37 L275.4,35.4"/></g>
<g stroke="#111" stroke-width=".85" fill="none"><path d="M282.4,31 L285,33.4 L287,30.4 M285,33.4 L284.6,37 M282.4,38 H287 M288.6,32.4 L290.8,31.6 M288,37.6 Q289.5,33.6 291.4,34.2 M288.8,36 L291,35.6"/><circle cx="284.8" cy="30.3" r=".6" fill="#111"/></g>
<path d="M301,30 Q304.6,33.2 305.2,35.6 Q305,38 302.4,38 Q299.6,37.8 299.8,35.2 Q300.2,33.6 301.6,33.2 Q300.6,35.6 302.2,36.4 Q303.8,36 302.8,33.6 Q302,31.6 301,30Z" fill="#111"/>
<g stroke="#111" stroke-width=".8" fill="none"><path d="M319.8,30.4 Q316,30.6 316.6,33 Q317.4,34.6 319.4,33.6 Q321.4,32.2 320,30.6 M317.6,34.6 Q315.4,36.8 317.8,37.8 Q320.6,38.2 322.6,36.6 M321.2,31.4 L323.2,30.6 M321.8,33.8 H324.2 M322.8,32.8 V35"/><circle cx="319" cy="35.4" r=".7" fill="#111"/></g>
<g stroke="#bcbcbc" stroke-width=".7" fill="none"><path d="M329.2,30.6 H338.2 M329.6,33.6 H338 M330,33.6 V37.6 M333.8,33.6 V37.6 M337.6,33.6 V37.6 M329.2,37.8 H338.4"/><circle cx="347.2" cy="34" r="4.1"/><path d="M347.2,31.4 V34.2 H349.6"/><path d="M371,32 H377 M371,36.6 H376 M376.6,32 L372,36.6 M376.4,36 L379,31"/></g>
<g font-family="Liberation Sans, sans-serif" font-size="6.4" font-weight="bold" fill="#111"><text x="355.4" y="35.2">Fe</text></g><path d="M360,36.6 Q362.8,37 365.6,33.4 M360.6,38 Q363.4,38.2 365.8,35.2" stroke="#222" stroke-width=".6" fill="none"/>
<g stroke="#111" stroke-width="1" fill="none"><path d="M397.3,29.6 V38.4 M399.6,30.6 V37.6 M399.6,32.4 H406 M399.6,35.4 H404.6"/></g>
<rect x="411.2" y="29.8" width="7.4" height="8.4" rx="1" fill="#9a9a9a"/><path d="M412.6,29.8 V38.2 M414.9,29.8 V38.2 M417.2,29.8 V38.2" stroke="#4a4a4a" stroke-width=".7"/><path d="M410.2,32.6 V35.4 M419.6,32.6 V35.4" stroke="#555" stroke-width=".8"/><path d="M411.2,30.2 H418.6 M411.2,37.8 H418.6" stroke="#444" stroke-width=".6"/>
<g stroke="#111" stroke-width=".8" fill="none"><path d="M425,30.4 V37.6 M425,34 L428.6,30.6 M425,34 L428.6,37.4"/><circle cx="429.6" cy="34" r="2.8"/><path d="M429.6,34 L432.2,32.4 M429.6,34 L431.8,36 M429.6,34 L427.6,35.6" stroke-width="1"/></g>
<!-- row2 icons -->
<rect x="9" y="48.4" width="8.4" height="7.8" fill="#f4f4f4" stroke="#333" stroke-width=".7"/><path d="M9,50 H17.4" stroke="#333" stroke-width=".8"/><circle cx="13.4" cy="53.4" r="1.5" fill="#b8a820" stroke="#555" stroke-width=".4"/>
<rect x="22.6" y="48.4" width="8.8" height="7.8" fill="#f4f4f4" stroke="#444" stroke-width=".7"/><path d="M22.6,50 H31.4" stroke="#444" stroke-width=".8"/><ellipse cx="27" cy="53.2" rx="3.2" ry="1.7" fill="none" stroke="#555" stroke-width=".6"/>
<g stroke="#666" stroke-width=".6" fill="#e6e6e6"><rect x="36.2" y="48.2" width="6.6" height="3.6"/><rect x="37.6" y="50.4" width="6.6" height="3.6"/><rect x="39" y="52.6" width="6.6" height="3.8"/></g><path d="M36.2,49 H42.8 M37.6,51.2 H44.2 M39,53.4 H45.6" stroke="#444" stroke-width=".7"/>
<rect x="50.2" y="48.6" width="8.2" height="7.6" fill="#f4f4f4" stroke="#c4c4c4" stroke-width=".6"/><path d="M50.2,48.6 L58.4,56.2 M58.4,48.6 L50.2,56.2" stroke="#c8c8c0" stroke-width=".6"/>
<rect x="164.6" y="48" width="8.2" height="8.2" fill="#fff" stroke="#333" stroke-width=".7"/><path d="M164.6,49.4 H172.8" stroke="#333" stroke-width=".8"/><path d="M168.7,50.6 V51.6 M168.2,52.6 H169 V55.4 M167.8,55.4 H170" stroke="#e01818" stroke-width="1" fill="none"/>
<g stroke="#9a9a9a" stroke-width=".6"><rect x="327.2" y="47.6" width="9.2" height="9.4" fill="#dcdcdc"/><rect x="341.2" y="47.6" width="9.2" height="9.4" fill="#dcdcdc"/><rect x="354.8" y="47.6" width="9.2" height="9.4" fill="#d4d4d4"/><rect x="368.4" y="47.6" width="9.2" height="9.4" fill="#e8e8e8"/></g>
<g stroke="#111" stroke-width=".8" fill="none"><path d="M329,55.6 V51 M331.8,56 V49.4 M334.6,55.6 V51 M328.4,52.6 H335.4 M329.6,50.6 L331.8,49 L334,50.6"/></g>
<path d="M342.4,53 V50.8 H345.4 V53.4 H348.6 V51.4" stroke="#e01818" stroke-width="1" fill="none"/>
<path d="M356.4,49.4 L362.4,55.4 M362.4,49.4 L356.4,55.4 M359.4,48.8 V56" stroke="#f08080" stroke-width=".7" fill="none"/>
<path d="M369.6,50.2 H376.4" stroke="#444" stroke-width=".8"/><path d="M369.8,52 Q373,57.6 376.4,52" stroke="#2040e0" stroke-width="1" fill="none"/><path d="M371,53.4 Q373,56 375.2,53.4" stroke="#30c030" stroke-width=".9" fill="none"/><circle cx="373" cy="54.4" r=".7" fill="#e8e020"/><circle cx="376.2" cy="51.6" r=".8" fill="#e02020"/>
<g stroke="#c0c0c0" stroke-width=".8" fill="none"><path d="M392.6,56 V51.6 M395.4,56.2 V50.4 M398.2,56 V52 M392.6,53 H398.2"/></g><circle cx="398.6" cy="49.4" r="1.5" fill="none" stroke="#e03030" stroke-width=".8"/>
<g stroke="#222" stroke-width=".75" fill="none"><path d="M413.2,48.4 V53.6 M413.2,53.6 L410.4,56.4 M413.2,50.4 H418.4 L419.6,53.6 H413.2 M419.6,53.6 L416.4,56"/></g>
<path d="M430.2,52.6 Q429.4,51 430.6,50.6 Q431.4,50.6 432,51.8 V49.2 Q432.2,48.4 433,48.4 Q433.6,48.4 433.7,49.2 V48.4 Q434,47.6 434.7,47.6 Q435.4,47.6 435.5,48.4 V49 Q435.8,48.4 436.4,48.4 Q437.1,48.5 437.2,49.3 V50.2 Q437.6,49.7 438.1,49.9 Q438.7,50.2 438.7,51 Q438.8,53.8 437.4,56.4 H432.8 Q431.4,54.6 430.2,52.6Z" fill="#fff" stroke="#1a1a1a" stroke-width=".6"/><path d="M433.7,49.2 V51.8 M435.5,49 V51.8 M437.2,50.2 V52.2" stroke="#1a1a1a" stroke-width=".45" fill="none"/>
<g><circle cx="446.6" cy="51.4" r="3" fill="#50d8e0" stroke="#222" stroke-width=".9"/><path d="M445.2,51.4 H448" stroke="#111" stroke-width=".9"/><path d="M448.8,53.8 L452,57" stroke="#1818a0" stroke-width="1.2"/></g>
<g><circle cx="460.4" cy="51.4" r="3" fill="#50d8e0" stroke="#222" stroke-width=".9"/><circle cx="460.4" cy="51.4" r="1.2" fill="#111"/><path d="M462.6,53.8 L465.8,57" stroke="#1818a0" stroke-width="1.2"/></g>
<rect x="470.6" y="48.2" width="8.4" height="8.2" fill="#8a8a8a"/><path d="M470.6,48.2 L473.6,51.2 M479,48.2 L476,51.2 M470.6,56.4 L473.6,53.4 M479,56.4 L476,53.4" stroke="#fff" stroke-width=".8"/><rect x="473.4" y="50.8" width="2.8" height="2.8" fill="#d8d8d8"/><path d="M470.6,48.2 H472.6 V49 H471.4 V50.2 H470.6Z M479,48.2 H477 V49 H478.2 V50.2 H479Z M470.6,56.4 H472.6 V55.6 H471.4 V54.4 H470.6Z M479,56.4 H477 V55.6 H478.2 V54.4 H479Z" fill="#111"/>
<path d="M491,55.2 L498.4,48.2 L499.8,49.6 L492.4,56.6Z" fill="#aaa" stroke="#333" stroke-width=".7"/>
<g stroke="#8a8a8a" stroke-width=".6" fill="#e8e8e8"><rect x="513" y="47.8" width="8.6" height="8.8"/><rect x="526.6" y="47.8" width="8.6" height="8.8"/><rect x="540.4" y="47.8" width="8.8" height="8.8"/><rect x="554" y="47.8" width="8.8" height="8.8"/></g>
<path d="M513,48.6 H521.6 M526.6,48.6 H535.2 M540.4,48.6 H549.2 M554,48.6 H562.8" stroke="#555" stroke-width="1"/>
<g font-family="Liberation Sans, sans-serif" font-size="6.8" font-weight="bold" fill="#d01010" stroke="#d01010" stroke-width=".3"><text x="514.6" y="55.4">D</text><text x="528.2" y="55.4">R</text></g>
<g fill="#d01818"><circle cx="543" cy="53" r="1.3"/><circle cx="546.4" cy="51.4" r="1.2"/><circle cx="545.8" cy="54.6" r="1.1"/><path d="M543.4,50 L545,52.4 L547.4,53.6" stroke="#d01818" stroke-width=".6" fill="none"/></g>
<g><circle cx="559.4" cy="51.8" r="1.9" fill="#fff" stroke="#3a4a8a" stroke-width=".7"/><path d="M558,53.4 L556,55.6" stroke="#3a4a8a" stroke-width=".9"/></g>
<g stroke="#b0b0b0" stroke-width=".6" fill="#ececec"><rect x="575.6" y="47.8" width="9" height="8.8"/><rect x="589.2" y="47.8" width="8.8" height="8.8"/></g><path d="M575.6,48.6 H584.6 M589.2,48.6 H598" stroke="#999" stroke-width=".9"/>
<path d="M577.6,51 V54.6 H582.6 V51 M579.2,52.4 V54.6 M581,52.4 V54.6" stroke="#a8a8a8" stroke-width=".6" fill="none"/><path d="M590.4,53.4 Q592,49.6 593.6,52.6 Q595.2,55.6 596.8,52.4" stroke="#888" stroke-width=".7" fill="none"/>
<rect x="611.4" y="47.8" width="8.6" height="9" fill="#333"/><rect x="612.8" y="49.6" width="5.8" height="1.5" fill="#e02020"/><rect x="612.8" y="51.1" width="5.8" height="1.3" fill="#e8e020"/><rect x="612.8" y="52.4" width="5.8" height="1.4" fill="#30d030"/><rect x="612.8" y="53.8" width="5.8" height="1.4" fill="#2060e0"/><rect x="612.4" y="48.2" width="6.6" height=".9" fill="#ddd"/><rect x="612.4" y="55.6" width="6.6" height=".8" fill="#ddd"/>
</svg>
<!-- left panel -->
<div class="abs" style="left:3px;top:335.5px;width:66px;height:1px;background:#c4c4c4"></div>
<div class="abs" style="left:68px;top:62px;width:1px;height:274px;background:#cfcfcf"></div>
<div class="pressed" style="left:7.3px;top:63.5px;width:19.3px;height:18.7px"></div>
<div class="hline" style="left:7.3px;top:144.1px;width:57.5px"></div>
<div class="combo" style="left:7px;top:149.1px;width:58px;height:11.7px;font-size:7.4px;color:#0a0a1c;-webkit-text-stroke:.12px #0a0a1c"><div class="t" style="top:2px;left:.9px;transform:scaleX(.75);transform-origin:0 0">SLS RC</div><div class="cbtn" style="width:9px"></div></div>
<div class="combo" style="left:7px;top:164.6px;width:58px;height:11.4px;font-size:7.4px;color:#0a0a1c;-webkit-text-stroke:.12px #0a0a1c"><div class="t ms" style="top:1.4px;left:.9px">Envelope</div><div class="cbtn" style="width:9px"></div></div>
<div class="combo" style="left:7px;top:176px;width:58px;height:11.2px;font-size:7.4px;color:#0a0a1c;-webkit-text-stroke:.12px #0a0a1c"><div class="t ms" style="top:1.3px;left:.9px">max</div><div class="cbtn" style="width:9px"></div></div>
<div class="hline" style="left:7.3px;top:190.4px;width:57.5px"></div>
<div class="pressed" style="left:26.2px;top:194.5px;width:19.4px;height:18.7px"></div>
<div class="hline" style="left:7.3px;top:278.2px;width:57.5px"></div>
<div class="pressed" style="left:7.3px;top:282.4px;width:19.4px;height:19.4px"></div>
<div class="hline" style="left:7.3px;top:305.6px;width:57.5px"></div>
<div class="pressed" style="left:7.3px;top:310px;width:19.4px;height:19.6px"></div>
<svg width="818" height="614" viewBox="0 0 818 614">
<!-- row 1 -->
<g stroke="#7a1010" stroke-width="1.2" fill="none"><path d="M11,77.5 L13.6,67 L25.2,68.6 L22.6,78"/></g><path d="M12.6,67.2 L24.8,68.8" stroke="#111" stroke-width=".8"/><circle cx="11" cy="77.8" r=".9" fill="#111"/><circle cx="22.6" cy="78.2" r=".9" fill="#111"/><text x="16.6" y="78.6" font-family="Liberation Sans, sans-serif" font-size="4.6" fill="#111">s</text>
<g id="slabA"><path d="M29.2,69 L33.8,65.8 V79.8 L29.2,76.2Z" fill="#8c8c8c" stroke="#222" stroke-width=".6"/><path d="M33.8,65.8 L37.2,69.2 V77.6 L33.8,79.8Z" fill="#3c3c3c" stroke="#222" stroke-width=".6"/><path d="M30.4,68.6 V76.8 M31.6,67.8 V77.8 M32.8,67 V78.8" stroke="#555" stroke-width=".4"/></g>
<g fill="#111" id="arrs"><path d="M39.2,66.4 H40.2 V69.4 H39.2Z M41.4,66.4 H42.4 V69.4 H41.4Z M38.8,71 H40.6 L39.7,73Z M41,71 H42.8 L41.9,73Z M38.8,74.6 H40.6 L39.7,77Z M41,74.6 H42.8 L41.9,77Z"/></g>
<g id="beamA"><path d="M48.4,69.4 V65.8 H56.6 L48.4,76Z" fill="#a8a8a8"/><path d="M48.4,76 L56.6,65.8 L59,67.4 L50.6,78.4 L48.4,78.6Z" fill="#e8e8e8" stroke="#222" stroke-width=".7"/><path d="M50.4,76.4 L58.2,66.8" stroke="#222" stroke-width=".4"/></g>
<use href="#arrs" x="20"/>
<!-- row 2 -->
<g stroke="#222" stroke-width=".8" fill="none"><path d="M11,95 V90.6 Q11.4,87.6 14.6,87.4 L19.6,86.6 Q21,87 20.6,90"/></g><path d="M15.2,92.4 L19.6,98.4 L22,97.4 L17.6,91.4Z" fill="#ddd" stroke="#7a1010" stroke-width=".9"/><path d="M16.4,93 L20.4,98" stroke="#7a1010" stroke-width=".5"/><circle cx="11" cy="95.6" r=".9" fill="#7a1010"/><text x="20.6" y="92.4" font-family="Liberation Sans, sans-serif" font-size="4.4" font-weight="bold" fill="#111">R</text>
<use href="#slabA" y="20.4"/><path d="M36,97.4 L38.6,95.4 V99.4Z" fill="#c01010"/><path d="M37,97.4 H40" stroke="#c01010" stroke-width=".7"/><text x="40" y="99.4" font-family="Liberation Sans, sans-serif" font-size="4.6" font-style="italic" font-weight="bold" fill="#111">σ</text>
<use href="#beamA" y="20.4"/><path d="M55,96.4 L57.6,94.6 V98.2Z" fill="#c01010"/><path d="M56,96.4 H59" stroke="#c01010" stroke-width=".7"/><text x="59" y="98.6" font-family="Liberation Sans, sans-serif" font-size="4.6" font-style="italic" font-weight="bold" fill="#111">σ</text>
<!-- row 3 disabled -->
<g stroke="#c6c6c6" stroke-width=".7" fill="none">
<path d="M10.4,113 L13.2,108 L15.6,112.6 V118 L13,114 L10.4,118Z M15.6,112.6 L18.4,107 L21.6,110.4 L24.4,113.6 M18.4,107 V111 M17.4,117 L21.6,110.4"/>
<path d="M29.6,107.4 H37 M30,117.6 H37.4 M32,107.4 Q33.6,112.4 32.2,117.6 M35,107.4 Q33.8,112.4 35.2,117.6 M38.6,110.4 H42.4 V119.4 H38.6Z M40,112 H41 M40,114.4 H41 M40,116.8 H41"/>
<path d="M48.6,112 L52.6,109 V118.4 L48.6,115Z M52.6,112.4 L58.6,105.4 M52.6,114 L63,110.4 M55.4,108.6 L63.4,116.4 M52.6,118.4 L57,114.4"/>
<path d="M16.2,126.2 Q17.2,125 18.2,126.2 V134 Q19,135.4 17.2,136.6 Q15.4,135.4 16.2,134Z" stroke="#c9c9c9"/>
</g>
<!-- row A: result houses -->
<g id="house"><path d="M10.4,201.4 L14.6,196.6 L19.6,200.6 L15.2,205.2Z" fill="#505050"/><path d="M10.4,201.4 L15.2,205.2 V211.6 L13.6,210.4 V206.8 L12,205.6 V209.4 L10.4,208.2Z" fill="#9a9a9a"/><path d="M15.2,205.2 L19.6,200.6 V208 L18.2,209.2 V205.4 L16.8,206.8 V210.4 L15.2,211.6Z" fill="#c4c4c4"/></g>
<use href="#house" x="19.6" y="-1"/><use href="#house" x="44.2" y="-1"/><use href="#house" x="0" y="19.6"/>
<g fill="#e01818" stroke="#e01818" stroke-width=".7"><path d="M18.2,208.4 L21.6,211.4" fill="none"/><circle cx="18" cy="208.2" r=".7"/><circle cx="21.8" cy="211.6" r=".7"/><path d="M41.4,201.6 V206" fill="none"/><circle cx="41.4" cy="201.4" r=".7"/><circle cx="41.4" cy="206.2" r=".7"/><path d="M52.8,210.6 L56.2,207.4" fill="none"/><circle cx="52.6" cy="210.8" r=".7"/><circle cx="56.4" cy="207.2" r=".7"/></g>
<g font-family="Liberation Sans, sans-serif" font-size="4.6" font-weight="bold" fill="#111"><text x="21" y="207.6">δ</text><text x="23.6" y="209">x</text><text x="40.8" y="197.6">δ</text><text x="43.4" y="200.4">y</text><text x="47.6" y="206">δ</text><text x="50.2" y="207.6">z</text></g>
<g stroke="#e01818" stroke-width=".8" fill="none"><path d="M20.8,221 V229"/></g><g font-family="Liberation Sans, sans-serif" font-size="4.2" font-weight="bold" fill="#e01818"><text x="19.4" y="224.4">y</text><text x="19.6" y="228">z</text><text x="16" y="232">δx+δ</text></g>
<!-- row C axes -->
<g id="axs" stroke="#111" stroke-width=".8" fill="none"><path d="M13.8,237.4 V244.8 L9.6,249.2 M13.8,244.8 L21.6,248.2"/><path d="M13.8,236.6 L12.8,238.6 H14.8Z M9,249.8 L9.4,247.6 L11,249Z M22.6,248.6 L20.4,248.8 L21,246.8Z" fill="#111" stroke="none"/></g>
<use href="#axs" x="19.8"/><use href="#axs" x="39.6"/>
<g font-family="Liberation Sans, sans-serif" font-size="3.8" font-weight="bold" fill="#111"><text x="10" y="238.6">y</text><text x="18" y="240.6">φ</text><text x="20" y="242.6">x</text><text x="7.6" y="247">z</text><text x="23.4" y="250">x</text>
<text x="29.8" y="238.6">y</text><text x="37.8" y="240.6">φ</text><text x="39.8" y="242.6">y</text><text x="27.4" y="247">z</text><text x="43.2" y="250">x</text>
<text x="49.6" y="238.6">y</text><text x="57.6" y="238.6">φ</text><text x="59.6" y="240.8">z</text><text x="47.2" y="247">z</text><text x="63" y="250">x</text></g>
<g stroke="#8a1818" stroke-width=".8" fill="none"><path d="M8.4,240.4 L15.2,243.6 M11.8,242 Q12.8,243.4 12.2,245"/><path d="M33.6,244.8 L36.4,250.8 L40.4,247"/><path d="M54.4,244 L63.6,240.2 M59.6,242 Q61.2,243.8 60.4,246"/></g>
<path d="M16.4,254.4 Q15.6,256.4 16.6,258.4 Q17.4,260.6 16.6,263 Q15.8,265.4 16.6,267.6 Q17.2,269.6 16.6,271" stroke="#c6c6c6" stroke-width=".7" fill="none"/><path d="M15.6,257 H17.6 M15.6,268.4 H17.6" stroke="#c6c6c6" stroke-width=".6"/>
<!-- row E -->
<path d="M15,288.6 V296 L16.8,294.4 L18.2,297.2 L19.2,296.6 L17.8,294 L20.4,293.8Z" fill="#111"/>
<path d="M32.1,295.5 L41.2,286.4" stroke="#111" stroke-width=".8"/><circle cx="32.1" cy="295.5" r="1" fill="#111"/><circle cx="41.2" cy="286.4" r="1" fill="#111"/><path d="M41.2,287 V296 L37.6,295.2 L34.6,297.2 L32.1,296Z" fill="#d8d8d8" opacity=".8"/><path d="M32.2,299.4 L33.8,297.6" stroke="#e8e020" stroke-width="1"/><path d="M33.8,297.6 L35.6,296" stroke="#30d030" stroke-width="1"/><path d="M35.6,296 L38,295" stroke="#20c8d8" stroke-width="1"/><path d="M38,295 L39.6,295.6" stroke="#e8e020" stroke-width="1"/><path d="M39.6,295.6 L41,297" stroke="#e02020" stroke-width="1"/>
<path d="M52,299 L53.6,297.4" stroke="#e8e020" stroke-width="1"/><path d="M53.6,297.4 L56,295.4" stroke="#30d030" stroke-width="1"/><path d="M56,295.4 L58.4,295.6" stroke="#20c8d8" stroke-width="1"/><path d="M58.4,295.6 L60.4,297.6" stroke="#e8a020" stroke-width="1"/><path d="M60.4,286.6 V297.4 L56,295Z" fill="#d0d0d0" opacity=".8"/>
<path d="M49.3,298.4 L60.6,286.2" stroke="#111" stroke-width="1"/><path d="M49.4,286.6 L61.4,298.6 M61,286.4 L49.2,298.4" stroke="#b01010" stroke-width="1"/>
<!-- row F -->
<path d="M10.5,318.5 L17.2,314.6 L25.5,322.4 V324 L19.9,327.6Z" fill="#0818d8"/><path d="M12.6,318.8 L17,316.2 L23.6,322.4 L19.8,325.4Z" fill="#10c8e0"/><path d="M14.2,319.2 L17,317.6 L22,322.4 L19.6,324.2Z" fill="#30e030"/><path d="M15.8,319.8 L17.2,319 L20.8,322.4 L19.4,323.2Z" fill="#f0e020"/><path d="M16.8,320.4 L17.4,320 L20,322.4 L19.2,322.6Z" fill="#f03020"/>
<path d="M48.8,317.4 L56,313.8 L64.2,325 L57.6,327.8Z" fill="#fff" stroke="#222" stroke-width=".7"/><path d="M50.6,320 L61,318.8" stroke="#222" stroke-width=".8"/><circle cx="50.6" cy="320" r="1" fill="#111"/><circle cx="61" cy="318.8" r="1" fill="#111"/><path d="M51.6,320.4 L54,322.6" stroke="#30c8d8" stroke-width="1"/><path d="M54,322.6 L56,323.4" stroke="#e02020" stroke-width="1"/><path d="M56,323.4 L58,322" stroke="#e8e020" stroke-width="1"/><path d="M58,322 L60,319.6" stroke="#30d030" stroke-width="1"/>
</svg>
<svg width="818" height="614" viewBox="0 0 818 614">
<!-- scrollbar arrows -->
<g fill="#111">
 <path d="M744.2,68.2 L746.2,65.6 L748.2,68.2Z"/>
 <path d="M744.2,567.6 L746.2,570.2 L748.2,567.6Z"/>
 <path d="M76,592.4 L73.4,594.6 L76,596.8Z"/>
 <path d="M718.4,592.4 L721,594.6 L718.4,596.8Z"/>
</g>
<!-- axis icon -->
<g font-family="Liberation Sans, sans-serif" font-weight="bold" font-size="5.6">
 <text x="735.6" y="581.6" fill="#20b020">Y</text>
 <text x="743.2" y="590.2" fill="#3030f0">Z</text>
</g>
<path d="M737.6,582 V587 H741.4" stroke="#3050e0" stroke-width=".8" fill="none"/>
<path d="M740.6,585.6 L742.6,587 L740.6,588.4" stroke="#e03030" stroke-width=".7" fill="none"/>
</svg>
</body>
</html>
